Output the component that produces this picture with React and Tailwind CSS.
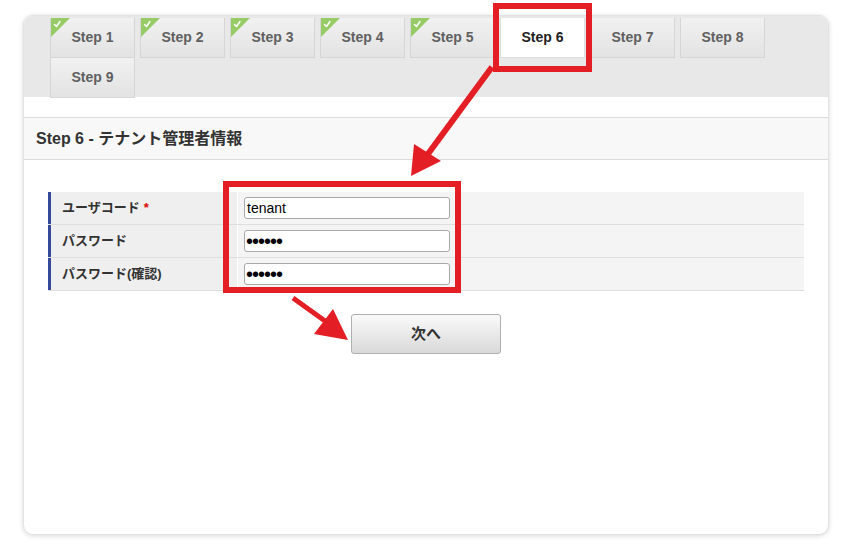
import React from 'react';

const steps = [1, 2, 3, 4, 5, 6, 7, 8, 9];
const current = 6;

const font = { fontFamily: '"Liberation Sans", "Noto Sans CJK JP", sans-serif' };

const DoneMark = () => (
  <svg className="absolute left-0 top-0" width="19" height="19" viewBox="0 0 19 19">
    <polygon points="0,0 19,0 0,19" fill="#97cb65" />
    <path d="M3.5 6.5 L5.5 8.5 L9 3.5" stroke="#fff" strokeWidth="1.5" fill="none" strokeLinecap="round" strokeLinejoin="round" />
  </svg>
);

const StepTab = ({ n }) => {
  const active = n === current;
  return (
    <div
      className={
        'relative mr-[5px] flex h-10 w-[85px] items-center justify-center border-x border-b text-[14px] font-bold ' +
        (active
          ? 'border-[#dcdcdc] bg-white text-[#222]'
          : 'border-[#d6d6d6] bg-gradient-to-b from-[#f1f1f1] to-[#e3e3e3] text-[#606060]')
      }
    >
      {n < current && <DoneMark />}
      Step {n}
    </div>
  );
};

const FormRow = ({ label, required, children }) => (
  <div className="flex h-[33px] border-b border-[#dedede]">
    <div className="flex w-[189px] items-center border-l-[3px] border-[#34499a] bg-[#efefef] pl-[11px] text-[13px] font-bold text-[#333]">
      {label}
      {required && <span className="ml-1 text-[#d00]">*</span>}
    </div>
    <div className="ml-px flex flex-1 items-center bg-[#f4f4f4] pl-[6px]">{children}</div>
  </div>
);

const Overlay = () => (
  <svg className="pointer-events-none absolute left-0 top-0" width="850" height="559">
    <rect x="496" y="6" width="93" height="63" fill="none" stroke="#e31e24" strokeWidth="6" />
    <rect x="226" y="184" width="232" height="106" fill="none" stroke="#e31e24" strokeWidth="6" />
    <line x1="492" y1="67" x2="425" y2="158" stroke="#e31e24" strokeWidth="6" />
    <polygon points="411,176 414,144 441,161" fill="#e31e24" />
    <line x1="293" y1="298" x2="332" y2="326" stroke="#e31e24" strokeWidth="5" />
    <polygon points="348,340 314,334 333,309" fill="#e31e24" />
  </svg>
);

export default function App() {
  return (
    <div className="relative h-[559px] w-[850px] bg-white" style={font}>
      <div className="absolute left-[23px] top-[15px] h-[520px] w-[806px] overflow-hidden rounded-[10px] border border-[#e2e2e2] bg-white shadow-[0_1px_5px_rgba(0,0,0,0.15)]">
        <div className="flex h-[81px] flex-wrap content-start bg-[#e8e8e8] pl-[26px] pt-[2px]">
          {steps.map((n) => (
            <StepTab key={n} n={n} />
          ))}
        </div>

        <div className="mt-5 flex h-[43px] items-center border-y border-[#dcdcdc] bg-[#f8f8f8] pl-3 text-[16px] font-bold text-[#333]">
          Step 6 - テナント管理者情報
        </div>

        <div className="mx-6 mt-8">
          <FormRow label="ユーザコード" required>
            <input
              readOnly
              value="tenant"
              className="h-[22px] w-[206px] rounded-[3px] border border-[#a9a9a9] bg-white px-[2px] text-[14px] text-black"
              style={{ fontFamily: '"Liberation Sans", sans-serif' }}
            />
          </FormRow>
          <FormRow label="パスワード">
            <input
              readOnly
              type="password"
              value="123456"
              className="h-[22px] w-[206px] rounded-[3px] border border-[#a9a9a9] bg-white px-[1px] text-[20px] leading-none tracking-[-1px] text-black"
            />
          </FormRow>
          <FormRow label="パスワード(確認)">
            <input
              readOnly
              type="password"
              value="123456"
              className="h-[22px] w-[206px] rounded-[3px] border border-[#a9a9a9] bg-white px-[1px] text-[20px] leading-none tracking-[-1px] text-black"
            />
          </FormRow>
        </div>

        <div className="mt-[23px] flex justify-center">
          <button className="h-10 w-[150px] rounded-[3px] border border-[#b0b0b0] bg-gradient-to-b from-[#fafafa] to-[#d9d9d9] text-[15px] font-bold text-[#333]">
            次へ
          </button>
        </div>
      </div>
      <Overlay />
    </div>
  );
}
